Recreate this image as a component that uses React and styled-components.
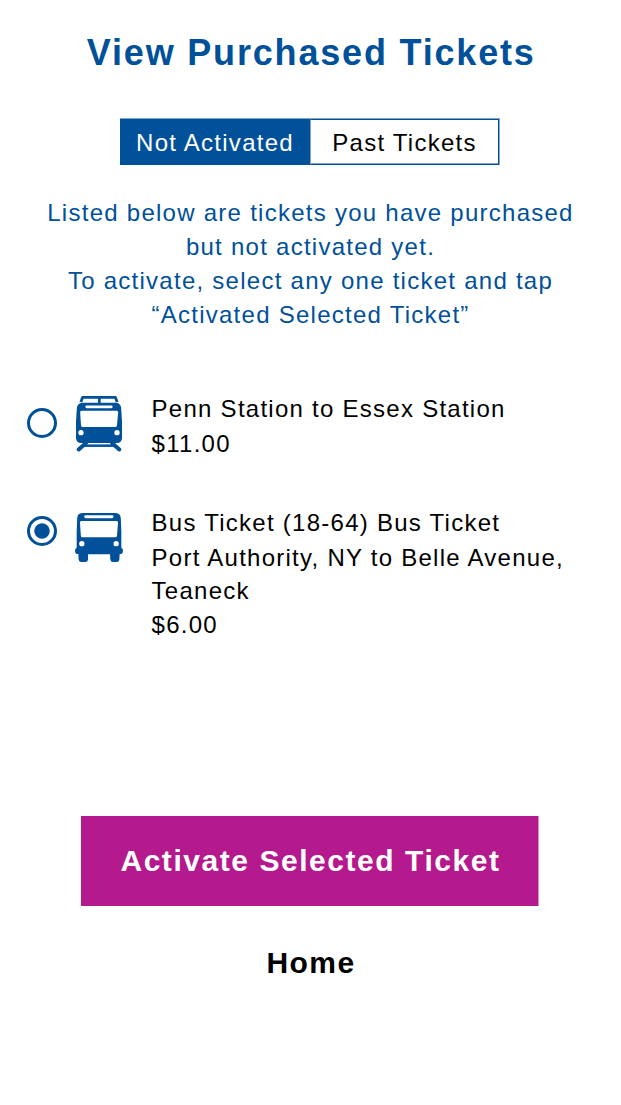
import React, { useState } from "react";
import styled, { createGlobalStyle } from "styled-components";

const BLUE = "#00509a";
const SOFT_BLUE = "#80a8cd";
const MAGENTA = "#b41a8d";
const SOFT_MAGENTA = "#da8dc6";

const GlobalStyle = createGlobalStyle`
  body {
    margin: 0;
    background: #fff;
    font-family: "Liberation Sans", Helvetica, Arial, sans-serif;
    font-size: 24px;
    line-height: 34px;
    letter-spacing: 1.26px;
    color: #000;
  }
  button {
    font: inherit;
    letter-spacing: inherit;
    border: 0;
    padding: 0;
    background: none;
    cursor: pointer;
  }
`;

const Screen = styled.main`
  box-sizing: border-box;
  width: 621px;
  height: 1105px;
  padding-top: 32px;
  display: flex;
  flex-direction: column;
  align-items: center;
  overflow: hidden;
`;

const Title = styled.h1`
  margin: 0;
  padding-left: 1.5px;
  font-size: 36px;
  line-height: 42px;
  letter-spacing: 1.82px;
  color: ${BLUE};
  white-space: nowrap;
`;

const Tabs = styled.div`
  display: flex;
  box-sizing: border-box;
  width: 380px;
  height: 47px;
  margin: 44px 1px 0 0;
  border-top: 1px solid ${SOFT_BLUE};
  border-right: 1px solid ${SOFT_BLUE};
`;

const Tab = styled.button`
  flex: none;
  box-sizing: border-box;
  white-space: nowrap;
  && {
    width: ${(p) => (p.$active ? 190 : 189)}px;
    padding-top: 1px;
    color: ${(p) => (p.$active ? "#fff" : "#000")};
    background: ${(p) => (p.$active ? BLUE : "#fff")};
    border: ${(p) => (p.$active ? "0" : `1px solid ${BLUE}`)};
    border-left: ${(p) => (p.$active ? "0" : `1px solid ${SOFT_BLUE}`)};
    box-shadow: ${(p) => (p.$active ? "none" : `inset 0 -1px ${SOFT_BLUE}`)};
  }
`;

const Intro = styled.p`
  margin: 31px 0 0;
  text-align: center;
  color: ${BLUE};
`;

const Line = styled.span`
  display: block;
  white-space: nowrap;
  line-height: ${(p) => p.$height ?? 34}px;
`;

const TicketList = styled.div`
  width: 100%;
  height: 424px;
  margin-top: 60px;
  display: flex;
  flex-direction: column;
  gap: 46px;
`;

const Ticket = styled.div`
  display: flex;
  align-items: flex-start;
  height: ${(p) => p.$lines * 34}px;
  padding-left: 27px;
  cursor: pointer;
`;

const Radio = styled.span`
  box-sizing: border-box;
  flex: none;
  display: grid;
  width: 30px;
  height: 30px;
  margin-top: ${(p) => p.$offset}px;
  border: 3px solid ${BLUE};
  border-radius: 50%;
`;

const Dot = styled.span`
  border-radius: 50%;
  background: radial-gradient(circle, ${BLUE} 7.2px, transparent 8.1px);
`;

const IconSlot = styled.span`
  flex: none;
  width: 48px;
  margin: ${(p) => p.$offset}px 28.6px 0 18px;
  svg {
    display: block;
  }
`;

const Details = styled.div`
  flex: none;
`;

const ActivateButton = styled.button`
  box-sizing: border-box;
  width: 458px;
  height: 90px;
  margin-right: 1px;
  white-space: nowrap;
  && {
    padding-left: 2px;
    border-right: 1px solid ${SOFT_MAGENTA};
    background: ${MAGENTA};
    background-clip: padding-box;
    color: #fff;
    font-size: 30px;
    font-weight: 700;
    letter-spacing: 1.55px;
  }
`;

const HomeButton = styled.button`
  margin-top: 40px;
  && {
    padding-left: 1px;
    font-size: 30px;
    font-weight: 700;
    letter-spacing: 1.4px;
    color: #000;
  }
`;

function TrainIcon() {
  return (
    <svg width="48" height="58" viewBox="165 30 144 174" fill="none">
      <path d="M182.500 51 188 37H286L291.500 51" stroke={BLUE} strokeWidth="8.500" strokeLinejoin="round" />
      <path d="M238 36V56" stroke={BLUE} strokeWidth="8" />
      <path
        fill={BLUE}
        fillRule="evenodd"
        d="M186 53.500H289Q302 55 303.500 70L306 110V160Q305 174 291 174H183Q169 174 168 160V110L170.500 70Q172 55 186 53.500Z
           M200 61.500Q196 61.500 196 65.500T200 69.500H274Q278 69.500 278 65.500T274 61.500Z
           M185 77Q180 77 180.500 82L183 121Q183 126 188 126H286Q291 126 291 121L294.500 82Q294.500 77 290 77Z
           M183 135A8 8 0 1 0 183 151A8 8 0 1 0 183 135Z
           M291 135A8 8 0 1 0 291 151A8 8 0 1 0 291 135Z"
      />
      <path d="M198 174 176 193.500M276 174 298 193.500" stroke={BLUE} strokeWidth="12" strokeLinecap="round" />
      <path d="M190 182H284" stroke={BLUE} strokeWidth="7.500" />
    </svg>
  );
}

function BusIcon() {
  return (
    <svg width="48" height="51" viewBox="165 36 144 153">
      <path
        fill={BLUE}
        fillRule="evenodd"
        d="M186 39H287Q302 40 302.500 56L304 95V144Q309 145 309 152T304 162H299L298 179Q297 186 290 186H279Q272 186 271 179L270 163H204V179Q203 186 196 186H184Q177 186 176 179L175 162H170Q165 160 165 152T170 144V95L171.500 56Q172 40 186 39Z
           M197 46Q192.500 46 192.500 50.300T197 54.600H276Q280.500 54.600 280.500 50.300T276 46Z
           M184 63Q179.500 63 180 68L182.500 107Q182.500 112 187 112H286Q290.500 112 291 107L294 68Q294 63 290 63Z
           M185.500 123A8 8 0 1 0 185.500 139A8 8 0 1 0 185.500 123Z
           M288.500 123A8 8 0 1 0 288.500 139A8 8 0 1 0 288.500 123Z"
      />
    </svg>
  );
}

const tickets = [
  {
    id: "train",
    Icon: TrainIcon,
    radioOffset: 16,
    iconOffset: 3,
    lines: [
      { text: "Penn Station to Essex Station" },
      { text: "$11.00", height: 36 },
    ],
  },
  {
    id: "bus",
    Icon: BusIcon,
    radioOffset: 10,
    iconOffset: 6,
    lines: [
      { text: "Bus Ticket (18-64) Bus Ticket" },
      { text: "Port Authority, NY to Belle Avenue,", height: 36 },
      { text: "Teaneck", height: 30 },
      { text: "$6.00", height: 38 },
    ],
  },
];

export default function App() {
  const [selected, setSelected] = useState("bus");
  return (
    <>
      <GlobalStyle />
      <Screen>
        <Title>View Purchased Tickets</Title>
        <Tabs>
          <Tab $active>Not Activated</Tab>
          <Tab>Past Tickets</Tab>
        </Tabs>
        <Intro>
          <Line>Listed below are tickets you have purchased</Line>
          <Line>but not activated yet.</Line>
          <Line>To activate, select any one ticket and tap</Line>
          <Line>“Activated Selected Ticket”</Line>
        </Intro>
        <TicketList>
          {tickets.map(({ id, Icon, radioOffset, iconOffset, lines }) => (
            <Ticket key={id} $lines={lines.length} onClick={() => setSelected(id)}>
              <Radio $offset={radioOffset}>{selected === id && <Dot />}</Radio>
              <IconSlot $offset={iconOffset}>
                <Icon />
              </IconSlot>
              <Details>
                {lines.map(({ text, height }) => (
                  <Line key={text} $height={height}>
                    {text}
                  </Line>
                ))}
              </Details>
            </Ticket>
          ))}
        </TicketList>
        <ActivateButton>Activate Selected Ticket</ActivateButton>
        <HomeButton>Home</HomeButton>
      </Screen>
    </>
  );
}
